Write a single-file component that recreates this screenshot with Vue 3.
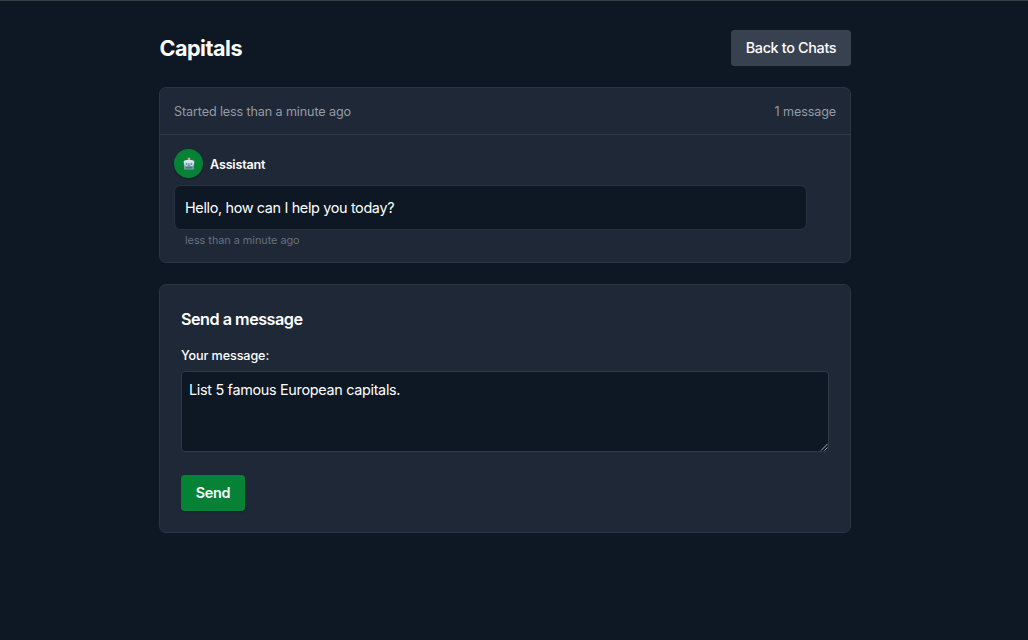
<script setup>
import { ref } from 'vue'

const draft = ref('List 5 famous European capitals.')
</script>

<template>
  <div class="page">
    <main class="wrap">
      <header class="head">
        <h1>Capitals</h1>
        <button class="back">Back to Chats</button>
      </header>

      <section class="card chat">
        <div class="meta">
          <span>Started less than a minute ago</span>
          <span>1 message</span>
        </div>
        <div class="messages">
          <div class="author">
            <span class="avatar">
              <svg width="14" height="14" viewBox="0 0 14 14">
                <path d="M7 1v3" stroke="#e8c36a" stroke-width="1.6" />
                <circle cx="7" cy="1.6" r="1.2" fill="#e9a053" />
                <path d="M1.6 4Q7 1.4 12.4 4L11.8 12.6H2.2Z" fill="#7ba0a8" />
                <path d="M1.9 4Q7 1.4 12.1 4V6H1.9Z" fill="#dbe6e9" />
                <circle cx="4.3" cy="6.8" r="2.2" fill="#c4e4ee" />
                <circle cx="9.7" cy="6.8" r="2.2" fill="#c4e4ee" />
                <circle cx="4.6" cy="7" r="1" fill="#4592b2" />
                <circle cx="9.4" cy="7" r="1" fill="#4592b2" />
                <path d="M7 7.4l.9 1.5H6.1Z" fill="#a06f6b" />
                <rect x="3.7" y="9.8" width="6.6" height="1.8" rx=".5" fill="#56757f" />
              </svg>
            </span>
            <span class="name">Assistant</span>
          </div>
          <div class="bubble"><span>Hello, how can I help you today?</span></div>
          <div class="time"><span>less than a minute ago</span></div>
        </div>
      </section>

      <section class="card compose">
        <h2>Send a message</h2>
        <label for="message">Your message:</label>
        <div class="field">
          <textarea id="message" v-model="draft" spellcheck="false"></textarea>
          <svg class="grip" width="8" height="8" viewBox="0 0 8 8">
            <path d="M1 7.5L7.5 1M4.5 7.5L7.5 4.5" stroke="#a9afb7" stroke-width="1" />
          </svg>
        </div>
        <button class="send">Send</button>
      </section>
    </main>
  </div>
</template>

<style>
body {
  background: #0e1825;
}
</style>

<style scoped>
.page {
  box-sizing: border-box;
  height: 640px;
  overflow: hidden;
  background: #0e1825;
  border-top: 1px solid #393e42;
  font-family: Inter, "Liberation Sans", sans-serif;
  color: #fff;
}
.wrap {
  width: 692px;
  margin-left: 159px;
  padding-top: 29px;
}
.head {
  display: flex;
  justify-content: space-between;
  align-items: center;
  height: 36px;
  margin-bottom: 21px;
}
h1 {
  margin: 0;
  padding-left: 0.5px;
  font-size: 21.6px;
  line-height: 29px;
  font-weight: 700;
  letter-spacing: -0.5px;
}
button {
  font-family: inherit;
  border: 0;
  padding: 0 0 2px;
  color: #fff;
  height: 36px;
  border-radius: 3.5px;
  font-size: 14.4px;
}
.back {
  width: 120px;
  background: #374150;
  font-weight: 500;
  letter-spacing: -0.34px;
}
.card {
  box-sizing: border-box;
  background: #1f2837;
  border: 1px solid #2b3441;
  border-radius: 7px;
}
.chat {
  height: 176px;
}
.meta {
  display: flex;
  justify-content: space-between;
  align-items: center;
  height: 46px;
  padding: 0 14px;
  border-bottom: 1px solid #2f3845;
  color: #959ba5;
  font-size: 12.6px;
  letter-spacing: -0.12px;
}
.messages {
  padding: 14px;
}
.author {
  display: flex;
  align-items: center;
  gap: 7px;
  height: 29px;
}
.avatar {
  display: flex;
  align-items: center;
  justify-content: center;
  width: 29px;
  height: 29px;
  border-radius: 50%;
  background: #058236;
  box-shadow: 0 1px 2px rgba(0, 0, 0, 0.3);
}
.name {
  padding-top: 1px;
  font-size: 12.6px;
  font-weight: 600;
  letter-spacing: -0.18px;
}
.bubble {
  box-sizing: border-box;
  width: 633px;
  height: 45px;
  margin-top: 7px;
  padding: 0 10px 1px;
  display: flex;
  align-items: center;
  border: 1px solid #273140;
  border-radius: 7px;
  background: #0e1724;
  font-size: 14.4px;
  letter-spacing: -0.34px;
}
.time {
  margin: 4px 11px 0;
  color: #69707d;
  font-size: 10.8px;
  line-height: 14px;
}
.compose {
  height: 249px;
  margin-top: 21px;
  padding: 21px;
}
h2 {
  margin: 0;
  padding-bottom: 1px;
  font-size: 16.2px;
  line-height: 26px;
  font-weight: 600;
  letter-spacing: -0.5px;
}
label {
  display: block;
  margin-top: 14px;
  font-size: 12.6px;
  line-height: 18px;
  font-weight: 500;
  letter-spacing: -0.1px;
}
.field {
  position: relative;
  height: 81px;
  margin-top: 6px;
}
textarea {
  box-sizing: border-box;
  display: block;
  width: 648px;
  height: 81px;
  padding: 7px;
  resize: none;
  outline: 0;
  border: 1px solid #303a46;
  border-radius: 3.5px;
  background: #0e1724;
  color: #fff;
  font-family: inherit;
  font-size: 14.4px;
  line-height: 22px;
  letter-spacing: -0.31px;
}
.grip {
  position: absolute;
  right: 1px;
  bottom: 1px;
  fill: none;
}
.send {
  display: block;
  width: 64px;
  margin-top: 23px;
  background: #058236;
  font-weight: 600;
  letter-spacing: -0.25px;
  box-shadow: 0 1px 2px rgba(0, 0, 0, 0.25);
}
</style>
